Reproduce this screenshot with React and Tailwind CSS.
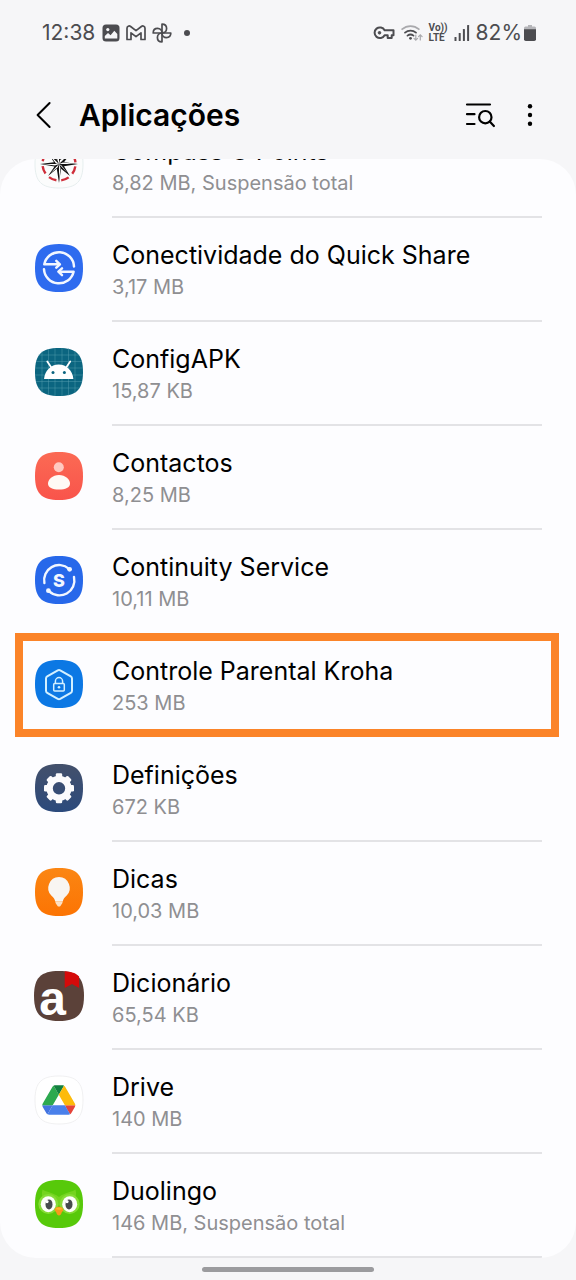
const SQUIRCLE = 'M24 0C41.500 0 48 6.500 48 24S41.500 48 24 48 0 41.500 0 24 6.500 0 24 0Z';

const Tile = ({ fill, children }) => (
  <svg viewBox="0 0 48 48" className="size-12 overflow-visible" fill="none" aria-hidden="true">
    <path d={SQUIRCLE} fill={fill} />
    {children}
  </svg>
);

const CompassIcon = () => (
  <svg viewBox="0 0 48 48" className="size-12 overflow-visible" fill="none" aria-hidden="true">
    <path d={SQUIRCLE} fill="#fbfcfc" stroke="#e6eeee" />
    <circle cx="24" cy="24" r="16.500" stroke="#cf2e3a" strokeWidth="2.400" strokeDasharray="8 4.960" strokeDashoffset="-2.500" />
    <path d="M24 5l2.200 14L36 13l-7 9.200L43 24l-14 2.200L35 36l-9-7.200L24 43l-2.200-14.200L13 36l6.500-9.500L5 24l14-1.800L12 12l10 7.500z" fill="#111" />
    <path d="M24 24V8l-1.700 12zM24 24H8l12 1.500zM24 24v16l1.500-12zM24 24h16l-12-1.500zM24 24l-9-8.500 6 8zM24 24l-8.500 9 7-5.500zM24 24l8.500 9-6-7.500zM24 24l9-9-8 5z" fill="#fff" />
  </svg>
);

const QuickShareIcon = () => (
  <Tile fill="#2e6bef">
    <g stroke="#f2f7ff" strokeWidth="2.500" strokeLinecap="round" strokeLinejoin="round">
      <path d="M39 22.500A15 15 0 0 0 9.300 20.300H24" />
      <path d="M21.300 16.900l3.600 3.400-3.600 3.400" />
      <path d="M9 25.200A15 15 0 0 0 38.600 27.700H24" />
      <path d="M27 24.300l-3.600 3.400 3.600 3.400" />
    </g>
  </Tile>
);

const ConfigIcon = () => (
  <Tile fill="#0b6580">
    <path
      d="M7 3.500V44.500M13.500 1V47M20 0V48M27 0V48M33.500 0V47.500M40 3V45M3.500 7H44.500M1 13.500H47M0 20H48M0 27H48M1 33.500H47M3.500 40H44.500"
      stroke="#5fa3b5"
      strokeOpacity="0.6"
      strokeWidth="0.7"
    />
    <path d="M12.300 13.500l4 6M35.200 13.500l-4 6" stroke="#fff" strokeWidth="1.800" strokeLinecap="round" />
    <path d="M9 31c.8-8.200 6.800-14.500 14.700-14.500S37.600 22.800 38.400 31z" fill="#fff" />
    <circle cx="18" cy="24.400" r="1.500" fill="#0b6580" />
    <circle cx="29.400" cy="24.400" r="1.500" fill="#0b6580" />
  </Tile>
);

const ContactsIcon = () => (
  <Tile fill="url(#contacts)">
    <defs>
      <linearGradient id="contacts" x1="0" y1="0" x2="0" y2="1">
        <stop stopColor="#fb6a54" />
        <stop offset="1" stopColor="#f9544b" />
      </linearGradient>
    </defs>
    <circle cx="23.800" cy="15.200" r="5" fill="#ffc9c1" />
    <path d="M24 23c6.500 0 11 4.500 11 8.500S30.500 37.500 24 37.500 13 35.500 13 31.500 17.500 23 24 23z" fill="#fffaf5" />
  </Tile>
);

const ContinuityIcon = () => (
  <Tile fill="#2768ea">
    <g stroke="#f2f7ff" strokeWidth="2.400" strokeLinecap="round">
      <path d="M9.400 27A15 15 0 0 1 34 12.800" />
      <path d="M39 21A15 15 0 0 1 14 35.200" />
    </g>
    <circle cx="34.600" cy="13.300" r="2.400" fill="#f2f7ff" />
    <circle cx="13.400" cy="34.700" r="2.400" fill="#f2f7ff" />
    <text x="24" y="30.500" textAnchor="middle" className="font-['Inter',sans-serif] text-[18px] font-extrabold" fill="#f2f7ff">
      S
    </text>
  </Tile>
);

const KrohaIcon = () => (
  <Tile fill="#0c78e4">
    <g stroke="#d3f0ff" strokeLinejoin="round">
      <path
        d="M22.800 10.300q1.200-.7 2.400 0l10.600 6.100q1.200.7 1.200 2.100v12.200q0 1.400-1.200 2.100l-10.600 6.100q-1.200.7-2.400 0l-10.600-6.100q-1.200-.7-1.200-2.100V18.500q0-1.400 1.200-2.100z"
        strokeWidth="2"
      />
      <rect x="18.700" y="23.400" width="10.600" height="7.600" rx="1" strokeWidth="1.500" />
      <path d="M20.400 23.200v-2a3.600 3.600 0 0 1 7.200 0v2" strokeWidth="1.500" />
    </g>
    <circle cx="24" cy="27.300" r="1.300" fill="#d3f0ff" />
  </Tile>
);

const TEETH = [0, 45, 90, 135, 180, 225, 270, 315];

const SettingsIcon = () => (
  <Tile fill="url(#settings)">
    <defs>
      <linearGradient id="settings" x1="0" y1="0" x2="0" y2="1">
        <stop stopColor="#43506b" />
        <stop offset="1" stopColor="#2c4a7c" />
      </linearGradient>
    </defs>
    <circle cx="24" cy="24.300" r="9.400" stroke="#fbfbfd" strokeWidth="6.400" />
    {TEETH.map((angle) => (
      <rect key={angle} x="20.800" y="9.300" width="6.400" height="6" rx="1.300" fill="#fbfbfd" transform={`rotate(${angle} 24 24.3)`} />
    ))}
  </Tile>
);

const TipsIcon = () => (
  <Tile fill="url(#tips)">
    <defs>
      <linearGradient id="tips" x1="0" y1="0" x2="0" y2="1">
        <stop stopColor="#fb8613" />
        <stop offset="1" stopColor="#fc7403" />
      </linearGradient>
    </defs>
    <path d="M24 9a11 11 0 0 1 7.500 18.800c-2 1.900-3.200 3.200-3.700 5.400h-7.600c-.5-2.200-1.700-3.500-3.700-5.400A11 11 0 0 1 24 9z" fill="#f8f5f2" />
    <path d="M20.200 33.200h7.600c-.2 2-1.200 3-2 4.200-.8 1.600-2.800 1.600-3.600 0-.8-1.200-1.800-2.200-2-4.200z" fill="#fde0c4" />
  </Tile>
);

const DictionaryIcon = () => (
  <svg viewBox="0 0 48 48" className="-m-px size-[50px] overflow-visible" fill="none" aria-hidden="true">
    <path d={SQUIRCLE} fill="#5b4139" />
    <path d="M29.500 0.200C36 .6 40 1.800 43.300 5.200V16.400l-6.800-4-7 4z" fill="#d40a0a" />
    <text x="5" y="42" className="font-['Liberation_Sans',sans-serif] text-[46px] font-bold" fill="#fff">
      a
    </text>
  </svg>
);

const DriveIcon = () => (
  <svg viewBox="0 0 48 48" className="size-12 overflow-visible" aria-hidden="true">
    <path d={SQUIRCLE} fill="#fff" stroke="#ececee" strokeWidth="0.8" />
    <g transform="translate(7.300 9.200) scale(0.378)">
      <path fill="#4374e0" d="m6.600 66.850 3.850 6.650c.8 1.400 1.950 2.500 3.300 3.300l13.750-23.800h-27.500c0 1.550.4 3.100 1.200 4.500z" />
      <path fill="#2da94f" d="m43.650 25-13.750-23.800c-1.350.8-2.500 1.900-3.300 3.300l-25.400 44a9.060 9.060 0 0 0-1.200 4.500h27.500z" />
      <path fill="#e5443a" d="m73.550 76.800c1.350-.8 2.500-1.900 3.300-3.300l1.600-2.750 7.650-13.250c.8-1.400 1.200-2.950 1.200-4.500h-27.500l5.850 11.500z" />
      <path fill="#12803f" d="m43.650 25 13.750-23.800c-1.350-.8-2.900-1.200-4.500-1.200h-18.500c-1.600 0-3.150.45-4.500 1.200z" />
      <path fill="#4a80ea" d="m59.800 53h-32.300l-13.750 23.800c1.350.8 2.900 1.200 4.500 1.200h50.800c1.600 0 3.150-.45 4.500-1.200z" />
      <path fill="#fdbb0a" d="m73.400 26.500-12.700-22c-.8-1.400-1.950-2.500-3.300-3.300l-13.750 23.800 16.150 28h27.450c0-1.550-.4-3.100-1.200-4.500z" />
    </g>
  </svg>
);

const DuolingoIcon = () => (
  <Tile fill="#57c90a">
    <path d="M7.500 9.500c4 3 10 2.500 16.500 7.500 6.500-5 12.500-4.500 16.500-7.500 1 4 .5 6.500 0 8L24 26 7.500 17.500c-.5-1.500-1-4 0-8z" fill="#74d41f" />
    <ellipse cx="13.300" cy="24" rx="10" ry="10" fill="#86dc38" />
    <ellipse cx="34.700" cy="24" rx="10" ry="10" fill="#86dc38" />
    <ellipse cx="13.300" cy="24.200" rx="7.500" ry="8" fill="#fdfffa" />
    <ellipse cx="34.700" cy="24.200" rx="7.500" ry="8" fill="#fdfffa" />
    <ellipse cx="14" cy="24.400" rx="3.500" ry="5" fill="#474b4d" />
    <ellipse cx="34" cy="24.400" rx="3.500" ry="5" fill="#474b4d" />
    <circle cx="12" cy="21.600" r="1.600" fill="#fff" />
    <circle cx="32" cy="21.600" r="1.600" fill="#fff" />
    <path d="M24 26.800c2.500 0 4.600 1.600 4.200 3.200-.3 1.500-1.200 1.600-1.600 2.800-.5 1.700-1.400 2.700-2.600 2.700s-2.100-1-2.600-2.700c-.4-1.200-1.300-1.300-1.600-2.800-.4-1.600 1.700-3.200 4.200-3.200z" fill="#f79a1c" />
    <path d="M20.500 29c1-1.600 6-1.600 7 0-1.600 1-5.400 1-7 0z" fill="#fbb928" />
  </Tile>
);

const APPS = [
  { name: 'Compass G Points', size: '8,82 MB, Suspensão total', Icon: CompassIcon },
  { name: 'Conectividade do Quick Share', size: '3,17 MB', Icon: QuickShareIcon },
  { name: 'ConfigAPK', size: '15,87 KB', Icon: ConfigIcon },
  { name: 'Contactos', size: '8,25 MB', Icon: ContactsIcon },
  { name: 'Continuity Service', size: '10,11 MB', Icon: ContinuityIcon, noDivider: true },
  { name: 'Controle Parental Kroha', size: '253 MB', Icon: KrohaIcon, noDivider: true, highlighted: true },
  { name: 'Definições', size: '672 KB', Icon: SettingsIcon },
  { name: 'Dicas', size: '10,03 MB', Icon: TipsIcon },
  { name: 'Dicionário', size: '65,54 KB', Icon: DictionaryIcon },
  { name: 'Drive', size: '140 MB', Icon: DriveIcon },
  { name: 'Duolingo', size: '146 MB, Suspensão total', Icon: DuolingoIcon },
];

const AppRow = ({ app }) => {
  const { name, size, Icon, noDivider, highlighted } = app;

  return (
    <li className="relative">
      <button type="button" className="flex w-full items-start gap-[29px] pl-[35px] pr-[34px] text-left">
        <span className="mt-[26px] size-12 shrink-0">
          <Icon />
        </span>
        <span className={`min-w-0 flex-1 border-b-2 py-[21px] ${noDivider ? 'border-transparent' : 'border-[#e3e3e6]'}`}>
          <span className="block text-[25px] leading-8 text-black">{name}</span>
          <span className="mt-1 block text-[20px] leading-6 text-[#8f8f92]">{size}</span>
        </span>
      </button>
      {highlighted && <span className="pointer-events-none absolute -top-px bottom-px left-[15px] right-[17px] border-8 border-[#fb8429]" />}
    </li>
  );
};

const StatusBar = () => (
  <div className="flex items-center justify-between py-5 pl-[42px] pr-10 text-[21px] leading-[26px] text-[#4c4c50]">
    <div className="flex items-center gap-[6px]">
      <span className="mr-px">12:38</span>
      <svg viewBox="0 0 18 18" className="size-[18px]" aria-hidden="true">
        <rect x="0.500" y="0.500" width="17" height="17" rx="3.500" fill="#4c4c50" />
        <circle cx="5.800" cy="5.600" r="1.600" fill="#f6f6f8" />
        <path d="M2.800 14.500v-2.600l3.200-3 2.600 2.400 3.700-4.600 3 3.400v4.400z" fill="#f6f6f8" />
      </svg>
      <svg viewBox="0 0 20 16" className="h-4 w-5" fill="none" stroke="#4c4c50" strokeWidth="1.700" strokeLinejoin="round" aria-hidden="true">
        <path d="M1 14.500V3.200C1 1.200 3.200.4 4.600 1.500L10 5.700l5.400-4.200C16.800.4 19 1.200 19 3.200v11.300h-4V7.800l-5 3.900-5-3.900v6.700z" />
      </svg>
      <svg viewBox="0 0 20 20" className="size-5" fill="none" stroke="#4c4c50" strokeWidth="1.700" strokeLinejoin="round" aria-hidden="true">
        <path d="M10 10V1.200c3 0 4.600 2 4.600 4.400S12.800 10 10 10z" />
        <path d="M10 10h8.800c0 3-2 4.600-4.400 4.600S10 12.800 10 10z" />
        <path d="M10 10v8.800c-3 0-4.600-2-4.600-4.400S7.200 10 10 10z" />
        <path d="M10 10H1.200c0-3 2-4.600 4.400-4.600S10 7.200 10 10z" />
      </svg>
      <span className="ml-1.5 size-1.5 rounded-full bg-[#4c4c50]" />
    </div>

    <div className="flex items-center gap-[6px]">
      <svg viewBox="0 0 22 14" className="h-3.5 w-[22px]" fill="none" stroke="#4c4c50" strokeWidth="2" strokeLinejoin="round" aria-hidden="true">
        <path d="M11.600 4.300H20.500V9.200H18.700V12H14.700V9.200H11.600A5.300 5.300 0 1 1 11.600 4.300z" />
        <circle cx="6.500" cy="6.800" r="1.300" fill="#4c4c50" strokeWidth="1" />
      </svg>
      <svg viewBox="0 0 22 18" className="h-[18px] w-[22px]" fill="none" strokeWidth="1.800" strokeLinecap="round" aria-hidden="true">
        <path d="M1.200 5.200A12.500 12.500 0 0 1 17.800 5.200" stroke="#a9a9ad" />
        <path d="M4 8.600A8.500 8.500 0 0 1 15 8.600" stroke="#4c4c50" />
        <path d="M6.500 11.600A5 5 0 0 1 12.500 11.600" stroke="#4c4c50" />
        <circle cx="9.500" cy="14.300" r="1.400" fill="#4c4c50" />
        <path d="M14.800 11v5M13 14.400l1.800 1.800 1.800-1.800M19.300 16v-5M17.500 12.700l1.800-1.800 1.800 1.800" stroke="#a9a9ad" strokeWidth="1.200" />
      </svg>
      <span className="flex flex-col font-['Roboto',sans-serif] text-[10px] font-bold leading-[10px]">
        <span>Vo))</span>
        <span>LTE</span>
      </span>
      <svg viewBox="0 0 16 16" className="size-4" fill="#4c4c50" aria-hidden="true">
        <rect x="0.500" y="12" width="2" height="4" rx="0.500" />
        <rect x="4.700" y="8" width="2" height="8" rx="0.500" />
        <rect x="8.900" y="4" width="2" height="12" rx="0.500" />
        <rect x="13.100" y="0" width="2" height="16" rx="0.500" />
      </svg>
      <span className="flex items-center gap-0.5">
        <span>82%</span>
        <svg viewBox="0 0 12 16" className="h-4 w-3" aria-hidden="true">
          <path d="M4 0h4v1.600h2.500A1.500 1.500 0 0 1 12 3.100V5H0V3.100a1.500 1.500 0 0 1 1.500-1.500H4z" fill="#b5b5b9" />
          <path d="M0 4.200h12v10A1.800 1.800 0 0 1 10.200 16H1.800A1.800 1.800 0 0 1 0 14.200z" fill="#4c4c50" />
        </svg>
      </span>
    </div>
  </div>
);

const Header = () => (
  <header className="flex items-center pb-6 pl-7 pr-[30px] pt-[29px]">
    <button type="button" aria-label="Voltar" className="size-8">
      <svg viewBox="0 0 32 32" className="size-8" fill="none" stroke="#000" strokeWidth="2" strokeLinecap="round" strokeLinejoin="round">
        <path d="M21.600 4L9.600 16l12 12" />
      </svg>
    </button>
    <h1 className="ml-[19px] flex-1 text-[30px] font-semibold leading-10 text-black">Aplicações</h1>
    <button type="button" aria-label="Filtrar e pesquisar" className="size-8">
      <svg viewBox="0 0 32 32" className="size-8" fill="none" stroke="#000" strokeWidth="2.200" strokeLinecap="round">
        <path d="M4 5.500H27M4 15.200H11.500M4 25H11.500M26.700 22.500l4.200 4.500" />
        <circle cx="22.300" cy="18.200" r="6.200" />
      </svg>
    </button>
    <button type="button" aria-label="Mais opções" className="ml-[19px] size-8">
      <svg viewBox="0 0 32 32" className="size-8" fill="#000">
        <circle cx="16" cy="7.200" r="2.200" />
        <circle cx="16" cy="16" r="2.200" />
        <circle cx="16" cy="24.800" r="2.200" />
      </svg>
    </button>
  </header>
);

const App = () => (
  <div className="flex min-h-screen flex-col bg-[#f6f6f8] font-['Inter','Roboto',sans-serif]">
    <StatusBar />
    <Header />
    <main className="overflow-hidden rounded-[36px] bg-[#fdfdff]">
      {/* list is scrolled part way into the first row */}
      <ul className="-mt-[45px]">
        {APPS.map((app) => (
          <AppRow key={app.name} app={app} />
        ))}
      </ul>
    </main>
    <div className="flex justify-center pb-2 pt-[9px]">
      <span className="h-[5px] w-[30%] rounded-full bg-[#9b9b9e]" />
    </div>
  </div>
);

export default App;
